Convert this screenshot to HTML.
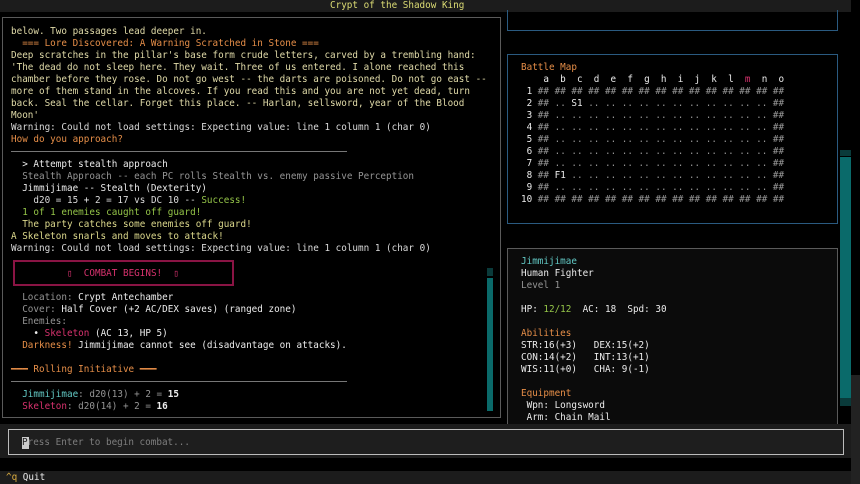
<!DOCTYPE html>
<html><head><meta charset="utf-8">
<style>
*{margin:0;padding:0;box-sizing:border-box}
body{width:860px;height:484px;background:#000;overflow:hidden;position:relative;font-family:"DejaVu Sans Mono","Liberation Mono",monospace;font-size:9.3px;line-height:12px;color:#dadada}
.a{position:absolute}
pre{font-family:inherit;font-size:inherit;line-height:12px;white-space:pre;position:absolute;margin-top:2px}
.o{color:#e68e48}.g{color:#94c448}.y{color:#dcd88c}.ly{color:#e0daa8}.p{color:#d8326e}.t{color:#62c8c4}.gr{color:#959595}.w{color:#ececec}.b{font-weight:bold}
</style></head><body>
<div class="a" style="left:0;top:0;width:851px;height:12px;background:#1c1c1c"></div>
<pre style="left:330px;top:-2px;color:#dcdc74">Crypt of the Shadow King</pre>
<div class="a" style="left:851px;top:375px;width:9px;height:109px;background:#222"></div>

<div class="a" style="left:2px;top:17px;width:499px;height:401px;border:1px solid #5a5a5a"></div>
<pre style="left:11px;top:24px"><span class="ly">below. Two passages lead deeper in.</span>
<span class="o">  === Lore Discovered: A Warning Scratched in Stone ===</span>
<span class="ly">Deep scratches in the pillar's base form crude letters, carved by a trembling hand:
'The dead do not sleep here. They wait. Three of us entered. I alone reached this
chamber before they rose. Do not go west -- the darts are poisoned. Do not go east --
more of them stand in the alcoves. If you read this and you are not yet dead, turn
back. Seal the cellar. Forget this place. -- Harlan, sellsword, year of the Blood
Moon'</span>
Warning: Could not load settings: Expecting value: line 1 column 1 (char 0)
<span class="o">How do you approach?</span></pre>
<div class="a" style="left:11px;top:151px;width:336px;height:1px;background:#777"></div>
<pre style="left:11px;top:157px"><span class="w">  &gt; Attempt stealth approach</span>
<span class="gr">  Stealth Approach -- each PC rolls Stealth vs. enemy passive Perception</span>
<span class="w">  Jimmijimae -- Stealth (Dexterity)</span>
    d20 = 15 <span class="w">+</span> 2 = 17 vs DC 10 -- <span class="g">Success!</span>
<span class="g">  1 of 1 enemies caught off guard!</span>
<span class="y">  The party catches some enemies off guard!</span>
<span class="y">A Skeleton snarls and moves to attack!</span>
Warning: Could not load settings: Expecting value: line 1 column 1 (char 0)</pre>
<div class="a" style="left:13px;top:260px;width:221px;height:26px;border:2px solid #8a1444"></div>
<pre class="p" style="left:67px;top:266px">▯  COMBAT BEGINS!  ▯</pre>
<pre style="left:11px;top:290px"><span class="gr">  Location: </span><span class="w">Crypt Antechamber</span>
<span class="gr">  Cover: </span><span class="w">Half Cover (+2 AC/DEX saves) (ranged zone)</span>
<span class="gr">  Enemies:</span>
<span class="w">    • </span><span class="p">Skeleton</span><span class="w"> (AC 13, HP 5)</span>
<span class="o">  Darkness!</span><span class="w"> Jimmijimae cannot see (disadvantage on attacks).</span>

<span class="o">━━━ Rolling Initiative ━━━</span></pre>
<div class="a" style="left:11px;top:381px;width:336px;height:1px;background:#777"></div>
<pre style="left:11px;top:387px"><span class="t">  Jimmijimae</span><span class="gr">: d20(13) + 2 = </span><span class="w b">15</span>
<span class="p">  Skeleton</span><span class="gr">: d20(14) + 2 = </span><span class="w b">16</span></pre>
<div class="a" style="left:487px;top:268px;width:6px;height:8px;background:#0a3a3a"></div>
<div class="a" style="left:487px;top:278px;width:6px;height:133px;background:#0a6a6a"></div>

<div class="a" style="left:507px;top:10px;width:331px;height:21px;border:1px solid #2a5a80;border-top:none"></div>
<div class="a" style="left:507px;top:54px;width:331px;height:170px;border:1px solid #2a5a80"></div>
<pre style="left:521px;top:60px"><span class="o">Battle Map</span>
<span class="w">    a  b  c  d  e  f  g  h  i  j  k  l  </span><span class="p">m</span><span class="w">  n  o</span>
<span class="w"> 1</span><span class="gr"> ## ## ## ## ## ## ## ## ## ## ## ## ## ## ##</span>
<span class="w"> 2</span><span class="gr"> ## .. </span><span class="w">S1</span><span class="gr"> .. .. .. .. .. .. .. .. .. .. .. ##</span>
<span class="w"> 3</span><span class="gr"> ## .. .. .. .. .. .. .. .. .. .. .. .. .. ##</span>
<span class="w"> 4</span><span class="gr"> ## .. .. .. .. .. .. .. .. .. .. .. .. .. ##</span>
<span class="w"> 5</span><span class="gr"> ## .. .. .. .. .. .. .. .. .. .. .. .. .. ##</span>
<span class="w"> 6</span><span class="gr"> ## .. .. .. .. .. .. .. .. .. .. .. .. .. ##</span>
<span class="w"> 7</span><span class="gr"> ## .. .. .. .. .. .. .. .. .. .. .. .. .. ##</span>
<span class="w"> 8</span><span class="gr"> ## </span><span class="w">F1</span><span class="gr"> .. .. .. .. .. .. .. .. .. .. .. .. ##</span>
<span class="w"> 9</span><span class="gr"> ## .. .. .. .. .. .. .. .. .. .. .. .. .. ##</span>
<span class="w">10</span><span class="gr"> ## ## ## ## ## ## ## ## ## ## ## ## ## ## ##</span></pre>

<div class="a" style="left:507px;top:248px;width:331px;height:200px;border:1px solid #5a5a5a;background:#0b0b0b"></div>
<pre style="left:521px;top:254px"><span class="t">Jimmijimae</span>
<span class="w">Human Fighter</span>
<span class="gr">Level 1</span>

<span class="w">HP: </span><span class="g">12/12</span><span class="w">  AC: 18  Spd: 30</span>

<span class="o">Abilities</span>
<span class="w">STR:16(+3)   DEX:15(+2)
CON:14(+2)   INT:13(+1)
WIS:11(+0)   CHA: 9(-1)</span>

<span class="o">Equipment</span>
<span class="w"> Wpn: Longsword
 Arm: Chain Mail</span></pre>

<div class="a" style="left:840px;top:150px;width:11px;height:6px;background:#0a3a3a"></div>
<div class="a" style="left:840px;top:157px;width:11px;height:241px;background:#0a6a6a"></div>
<div class="a" style="left:840px;top:398px;width:11px;height:8px;background:#0a3a3a"></div>

<div class="a" style="left:0;top:424px;width:851px;height:34px;background:#1c1c1c"></div>
<div class="a" style="left:8px;top:429px;width:836px;height:26px;border:1px solid #bcbcbc;background:#1e1e1e"></div>
<div class="a" style="left:22px;top:437px;width:7px;height:12px;background:#ccc"></div>
<pre style="left:22px;top:435px;color:#7e7e7e"><span style="color:#222">P</span>ress Enter to begin combat...</pre>

<div class="a" style="left:0;top:458px;width:851px;height:26px;background:#000"></div>
<div class="a" style="left:0;top:471px;width:851px;height:13px;background:#1c1c1c"></div>
<pre style="left:6px;top:470px"><span style="color:#e0b040">^q</span><span class="w"> Quit</span></pre>
</body></html>
